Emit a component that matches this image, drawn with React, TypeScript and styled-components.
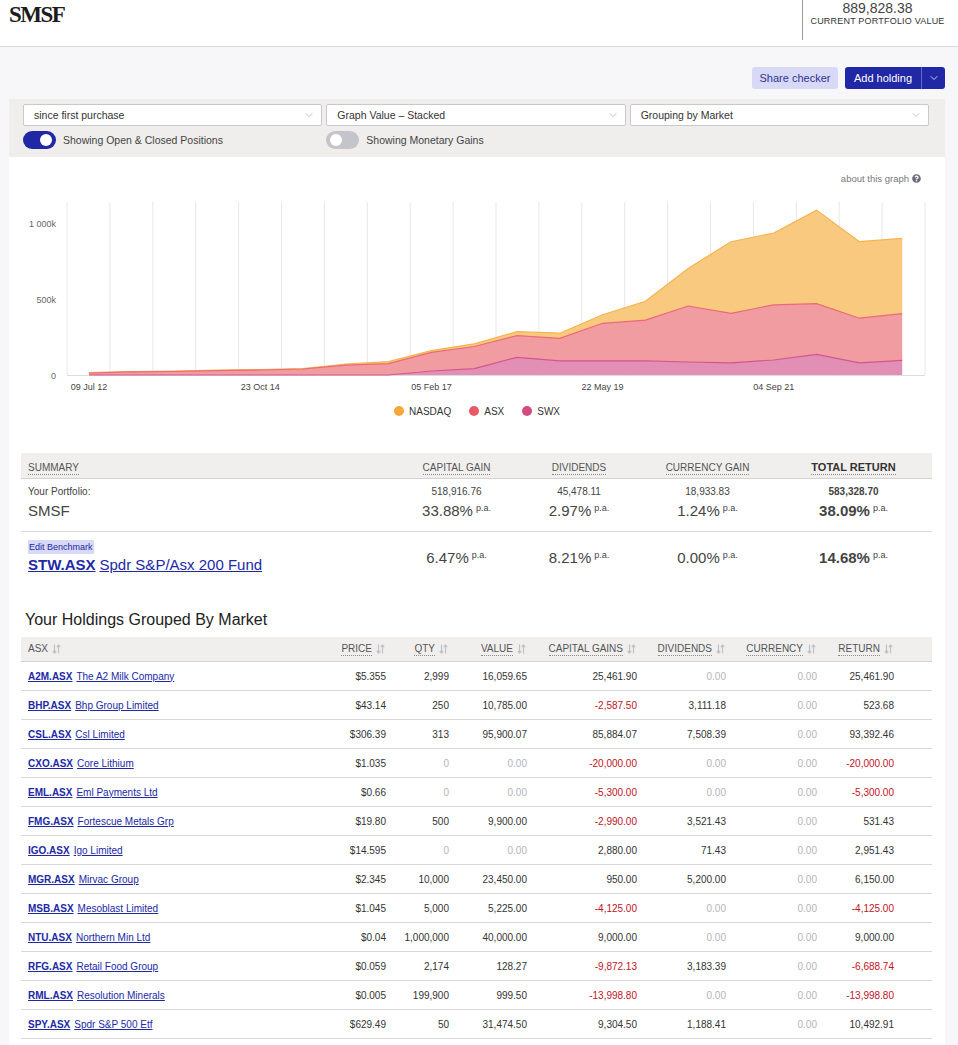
import React from "react";
import styled, { createGlobalStyle } from "styled-components";
import { ChevronDown } from "lucide-react";
import { FaQuestionCircle } from "react-icons/fa";

const GlobalStyle = createGlobalStyle`
  html, body {
    margin: 0;
    padding: 0;
    background: #f7f7f9;
  }
  body {
    font-family: "Liberation Sans", Arial, sans-serif;
    color: #333;
  }
  * { box-sizing: border-box; }
`;

const BLUE = "#2128a6";

/* ---------- header ---------- */

const Header = styled.header`
    display: flex;
    justify-content: space-between;
    align-items: flex-start;
    height: 47px;
    background: #fff;
    border-bottom: 1px solid #d9d9de;
`;

const Title = styled.h1`
    margin: 0;
    padding: 2px 0 0 9px;
    font-family: "Liberation Serif", "Times New Roman", serif;
    font-weight: 700;
    font-size: 23px;
    line-height: 26px;
    letter-spacing: -1.5px;
    color: #1c1c1c;
`;

const ValueBlock = styled.div`
    width: 150px;
    height: 40px;
    margin-right: 6px;
    border-left: 1px solid #9a9a9a;
    text-align: center;
`;

const ValueAmount = styled.div`
    font-size: 14px;
    line-height: 16px;
    color: #444;
`;

const ValueLabel = styled.div`
    font-size: 9px;
    line-height: 11px;
    letter-spacing: 0.2px;
    color: #333;
`;

/* ---------- action buttons ---------- */

const Actions = styled.div`
    display: flex;
    justify-content: flex-end;
    gap: 7px;
    padding: 20px 13px 10px 0;
`;

const ShareButton = styled.button`
    height: 22px;
    width: 86px;
    border: none;
    border-radius: 3px;
    background: #d8d9f6;
    color: #2e3494;
    font-family: inherit;
    font-size: 11px;
    padding: 0;
`;

const AddGroup = styled.div`
    display: flex;
    height: 22px;
    border-radius: 3px;
    overflow: hidden;
    background: ${BLUE};
`;

const AddButton = styled.button<{ $caret?: boolean }>`
    height: 22px;
    width: ${p => (p.$caret ? 24 : 76)}px;
    border: none;
    border-left: ${p => (p.$caret ? "1px solid rgba(255,255,255,0.3)" : "none")};
    background: transparent;
    color: #fff;
    font-family: inherit;
    font-size: 11px;
    padding: 0;
    display: flex;
    align-items: center;
    justify-content: center;
`;

/* ---------- card + filter bar ---------- */

const Card = styled.main`
    margin: 0 13px 0 9px;
    background: #fff;
    padding-bottom: 40px;
`;

const FilterBar = styled.div`
    background: #efeeed;
    padding: 5px 16px 8px 14px;
    display: grid;
    grid-template-columns: repeat(3, 1fr);
    column-gap: 4px;
    row-gap: 5px;
`;

const Select = styled.div`
    height: 22px;
    background: #fff;
    border: 1px solid #c9c9cd;
    border-radius: 2px;
    display: flex;
    align-items: center;
    justify-content: space-between;
    padding: 0 6px 0 10px;
    font-size: 10.5px;
    color: #333;
`;

const ToggleItem = styled.label`
    display: flex;
    align-items: center;
    gap: 7px;
    font-size: 10.5px;
    color: #444;
    height: 18px;
`;

const Switch = styled.span<{ $on?: boolean }>`
    position: relative;
    width: 33px;
    height: 18px;
    border-radius: 9px;
    background: ${p => (p.$on ? BLUE : "#c4c4ca")};
    &::after {
        content: "";
        position: absolute;
        top: 3px;
        left: ${p => (p.$on ? "17px" : "4px")};
        width: 12px;
        height: 12px;
        border-radius: 50%;
        background: #fff;
    }
`;

/* ---------- chart ---------- */

const ChartSection = styled.section`
    padding-top: 14px;
`;

const AboutRow = styled.div`
    display: flex;
    justify-content: flex-end;
    align-items: center;
    gap: 3px;
    height: 14px;
    padding-right: 24px;
    font-size: 9.5px;
    color: #777;
`;

const ChartSvg = styled.svg`
    display: block;
    margin-top: 9px;
    font-family: "Liberation Sans", Arial, sans-serif;
`;

const Legend = styled.div`
    display: flex;
    justify-content: center;
    gap: 18px;
    margin-top: 10px;
    height: 14px;
`;

const LegendItem = styled.div`
    display: flex;
    align-items: center;
    gap: 5px;
    font-size: 10px;
    color: #333;
`;

const Dot = styled.span<{ $c: string }>`
    width: 10px;
    height: 10px;
    border-radius: 50%;
    background: ${p => p.$c};
`;

/* ---------- summary ---------- */

const Content = styled.div`
    padding: 35px 13px 0 12px;
`;

const SumGrid = styled.div<{ $head?: boolean; $last?: boolean }>`
    display: grid;
    grid-template-columns: 374px 123px 122px 135px 1fr;
    align-items: center;
    background: ${p => (p.$head ? "#f0efee" : "#fff")};
    border-bottom: ${p => (p.$last ? "none" : `1px solid ${p.$head ? "#d4d4d4" : "#dcdcdc"}`)};
    height: ${p => (p.$head ? "26px" : "auto")};
    padding: ${p => (p.$head ? "0" : p.$last ? "8px 0 8px" : "6px 0 8px")};
`;

const HeadCell = styled.div<{ $left?: boolean; $strong?: boolean }>`
    text-align: ${p => (p.$left ? "left" : "center")};
    padding-left: ${p => (p.$left ? "7px" : "0")};
    span {
        font-size: ${p => (p.$strong ? "11px" : "10px")};
        font-weight: ${p => (p.$strong ? 700 : 400)};
        color: ${p => (p.$strong ? "#333" : "#555")};
        border-bottom: 1px dotted #8a8a8a;
        padding-bottom: 1px;
    }
`;

const LabelCell = styled.div`
    padding-left: 7px;
`;

const Small = styled.div<{ $bold?: boolean }>`
    font-size: 10px;
    line-height: 14px;
    color: #444;
    font-weight: ${p => (p.$bold ? 700 : 400)};
`;

const Big = styled.div<{ $bold?: boolean }>`
    font-size: 15px;
    line-height: 24px;
    height: 24px;
    color: #444;
    font-weight: ${p => (p.$bold ? 700 : 400)};
    sup {
        font-size: 9px;
        line-height: 0;
        font-weight: 400;
        vertical-align: 5px;
        margin-left: 3px;
    }
`;

const NumCell = styled.div`
    text-align: center;
`;

const EditTag = styled.span`
    display: block;
    width: fit-content;
    background: #d8d9f6;
    color: ${BLUE};
    font-size: 9px;
    line-height: 14px;
    padding: 0 1px;
`;

const BenchLine = styled.div`
    font-size: 15px;
    line-height: 22px;
    a {
        color: ${BLUE};
        text-decoration: underline;
    }
    a:first-child {
        font-weight: 700;
        margin-right: 4px;
    }
`;

/* ---------- holdings ---------- */

const SectionTitle = styled.h2`
    margin: 26px 0 7px 4px;
    font-size: 16px;
    line-height: 20px;
    font-weight: 400;
    color: #222;
`;

const HoldGrid = styled.div<{ $head?: boolean }>`
    display: grid;
    grid-template-columns: 309px 64px 63px 78px 110px 89px 91px 77px 1fr;
    align-items: center;
    height: ${p => (p.$head ? "25px" : "29px")};
    background: ${p => (p.$head ? "#f0efee" : "#fff")};
    border-bottom: 1px solid ${p => (p.$head ? "#d4d4d4" : "#d8d8dc")};
    font-size: 10px;
`;

const HCell = styled.div<{ $left?: boolean }>`
    display: flex;
    align-items: center;
    justify-content: ${p => (p.$left ? "flex-start" : "flex-end")};
    gap: 4px;
    padding: ${p => (p.$left ? "0 0 0 7px" : "0 9px 0 0")};
    color: #555;
    span {
        border-bottom: ${p => (p.$left ? "none" : "1px dotted #8a8a8a")};
        padding-bottom: 1px;
    }
`;

const NameCell = styled.div`
    padding-left: 7px;
    white-space: nowrap;
    a {
        color: ${BLUE};
        text-decoration: underline;
    }
    a:first-child {
        font-weight: 700;
        margin-right: 4px;
    }
`;

const Num = styled.div<{ $tone?: "neg" | "zero" }>`
    text-align: right;
    padding-right: 8px;
    color: ${p => (p.$tone === "neg" ? "#c0141f" : p.$tone === "zero" ? "#b4b4bc" : "#333")};
`;

/* ---------- data ---------- */

const swx = [0, 0, 0, 0, 0, 0, 0, 0, 26, 42, 116, 92, 92, 92, 85, 80, 98, 135, 80, 96];
const asx = [13, 20, 23, 29, 33, 39, 65, 74, 122, 144, 141, 148, 246, 267, 366, 323, 361, 331, 291, 305];
const nasdaq = [3, 3, 3, 4, 3, 3, 7, 13, 11, 17, 26, 33, 56, 123, 246, 468, 469, 612, 500, 492];

const X0 = 89;
const DX = 42.8;
const BASE = 376;
const SCALE = 0.153;
const px = (i: number) => X0 + DX * i;
const py = (v: number) => BASE - v * SCALE;

const lvl1 = swx;
const lvl2 = swx.map((v, i) => v + asx[i]);
const lvl3 = lvl2.map((v, i) => v + nasdaq[i]);

const line = (arr: number[]) => arr.map((v, i) => `${px(i).toFixed(1)},${py(v).toFixed(1)}`).join(" ");
const band = (upper: number[], lower: number[] | null) => {
    const top = upper.map((v, i) => `${px(i).toFixed(1)},${py(v).toFixed(1)}`);
    const bottom = (lower || upper.map(() => 0))
        .map((v, i) => `${px(i).toFixed(1)},${py(v).toFixed(1)}`)
        .reverse();
    return [...top, ...bottom].join(" ");
};

const xLabels = [
    { i: 0, t: "09 Jul 12" },
    { i: 4, t: "23 Oct 14" },
    { i: 8, t: "05 Feb 17" },
    { i: 12, t: "22 May 19" },
    { i: 16, t: "04 Sep 21" },
];

type Tone = "neg" | "zero" | undefined;
type Holding = { code: string; name: string; cells: [string, Tone][] };

const n = (s: string): [string, Tone] => [s, s.startsWith("-") ? "neg" : s === "0.00" || s === "0" ? "zero" : undefined];

const holdings: Holding[] = [
    ["A2M.ASX", "The A2 Milk Company", "$5.355", "2,999", "16,059.65", "25,461.90", "0.00", "0.00", "25,461.90"],
    ["BHP.ASX", "Bhp Group Limited", "$43.14", "250", "10,785.00", "-2,587.50", "3,111.18", "0.00", "523.68"],
    ["CSL.ASX", "Csl Limited", "$306.39", "313", "95,900.07", "85,884.07", "7,508.39", "0.00", "93,392.46"],
    ["CXO.ASX", "Core Lithium", "$1.035", "0", "0.00", "-20,000.00", "0.00", "0.00", "-20,000.00"],
    ["EML.ASX", "Eml Payments Ltd", "$0.66", "0", "0.00", "-5,300.00", "0.00", "0.00", "-5,300.00"],
    ["FMG.ASX", "Fortescue Metals Grp", "$19.80", "500", "9,900.00", "-2,990.00", "3,521.43", "0.00", "531.43"],
    ["IGO.ASX", "Igo Limited", "$14.595", "0", "0.00", "2,880.00", "71.43", "0.00", "2,951.43"],
    ["MGR.ASX", "Mirvac Group", "$2.345", "10,000", "23,450.00", "950.00", "5,200.00", "0.00", "6,150.00"],
    ["MSB.ASX", "Mesoblast Limited", "$1.045", "5,000", "5,225.00", "-4,125.00", "0.00", "0.00", "-4,125.00"],
    ["NTU.ASX", "Northern Min Ltd", "$0.04", "1,000,000", "40,000.00", "9,000.00", "0.00", "0.00", "9,000.00"],
    ["RFG.ASX", "Retail Food Group", "$0.059", "2,174", "128.27", "-9,872.13", "3,183.39", "0.00", "-6,688.74"],
    ["RML.ASX", "Resolution Minerals", "$0.005", "199,900", "999.50", "-13,998.80", "0.00", "0.00", "-13,998.80"],
    ["SPY.ASX", "Spdr S&P 500 Etf", "$629.49", "50", "31,474.50", "9,304.50", "1,188.41", "0.00", "10,492.91"],
].map(([code, name, ...rest]) => ({ code, name, cells: rest.map(n) }));

const SortIcon = () => (
    <svg width="9" height="10" viewBox="0 0 9 10">
        <g stroke="#c2c2c6" strokeWidth="1.2" fill="none">
            <path d="M2.5 0.5 V9 M0.8 7 L2.5 9 L4.2 7" />
            <path d="M6.5 9.5 V1 M4.8 3 L6.5 1 L8.2 3" />
        </g>
    </svg>
);

const Chart = () => (
    <ChartSvg width="936" height="200" viewBox="9 195 936 200">
        {Array.from({ length: 21 }, (_, i) => (
            <line key={i} x1={67 + 42.9 * i} x2={67 + 42.9 * i} y1={203} y2={376} stroke="#e8e8ea" strokeWidth="1" />
        ))}
        <line x1={67} x2={925} y1={376.5} y2={376.5} stroke="#dcdcdc" />
        <polygon points={band(lvl3, lvl2)} fill="#f9c576" fillOpacity="0.93" />
        <polygon points={band(lvl2, lvl1)} fill="#f0949a" fillOpacity="0.93" />
        <polygon points={band(lvl1, null)} fill="#df86ae" fillOpacity="0.93" />
        <polyline points={line(lvl3)} fill="none" stroke="#f6b24f" strokeWidth="1.2" />
        <polyline points={line(lvl2)} fill="none" stroke="#ea6a76" strokeWidth="1.2" />
        <polyline points={line(lvl1)} fill="none" stroke="#d6548d" strokeWidth="1.2" />
        <g fontSize="9" fill="#666" textAnchor="end">
            <text x={56} y={227.5}>1 000k</text>
            <text x={56} y={303.5}>500k</text>
            <text x={56} y={380}>0</text>
        </g>
        <g fontSize="9" fill="#444" textAnchor="middle">
            {xLabels.map(l => (
                <text key={l.t} x={px(l.i)} y={391}>{l.t}</text>
            ))}
        </g>
    </ChartSvg>
);

export default function App() {
    return (
        <>
            <GlobalStyle />
            <Header>
                <Title>SMSF</Title>
                <ValueBlock>
                    <ValueAmount>889,828.38</ValueAmount>
                    <ValueLabel>CURRENT PORTFOLIO VALUE</ValueLabel>
                </ValueBlock>
            </Header>

            <Actions>
                <ShareButton>Share checker</ShareButton>
                <AddGroup>
                    <AddButton>Add holding</AddButton>
                    <AddButton $caret>
                        <ChevronDown size={12} strokeWidth={1.5} />
                    </AddButton>
                </AddGroup>
            </Actions>

            <Card>
                <FilterBar>
                    <Select>
                        since first purchase <ChevronDown size={12} strokeWidth={1} color="#888" />
                    </Select>
                    <Select>
                        Graph Value – Stacked <ChevronDown size={12} strokeWidth={1} color="#888" />
                    </Select>
                    <Select>
                        Grouping by Market <ChevronDown size={12} strokeWidth={1} color="#888" />
                    </Select>
                    <ToggleItem>
                        <Switch $on />
                        Showing Open &amp; Closed Positions
                    </ToggleItem>
                    <ToggleItem>
                        <Switch />
                        Showing Monetary Gains
                    </ToggleItem>
                </FilterBar>

                <ChartSection>
                    <AboutRow>
                        about this graph <FaQuestionCircle size={9} color="#6b6b75" />
                    </AboutRow>
                    <Chart />
                    <Legend>
                        <LegendItem><Dot $c="#f7a73a" />NASDAQ</LegendItem>
                        <LegendItem><Dot $c="#e85a66" />ASX</LegendItem>
                        <LegendItem><Dot $c="#d34a80" />SWX</LegendItem>
                    </Legend>
                </ChartSection>

                <Content>
                    <SumGrid $head>
                        <HeadCell $left><span>SUMMARY</span></HeadCell>
                        <HeadCell><span>CAPITAL GAIN</span></HeadCell>
                        <HeadCell><span>DIVIDENDS</span></HeadCell>
                        <HeadCell><span>CURRENCY GAIN</span></HeadCell>
                        <HeadCell $strong><span>TOTAL RETURN</span></HeadCell>
                    </SumGrid>
                    <SumGrid>
                        <LabelCell>
                            <Small>Your Portfolio:</Small>
                            <Big>SMSF</Big>
                        </LabelCell>
                        <NumCell>
                            <Small>518,916.76</Small>
                            <Big>33.88%<sup>p.a.</sup></Big>
                        </NumCell>
                        <NumCell>
                            <Small>45,478.11</Small>
                            <Big>2.97%<sup>p.a.</sup></Big>
                        </NumCell>
                        <NumCell>
                            <Small>18,933.83</Small>
                            <Big>1.24%<sup>p.a.</sup></Big>
                        </NumCell>
                        <NumCell>
                            <Small $bold>583,328.70</Small>
                            <Big $bold>38.09%<sup>p.a.</sup></Big>
                        </NumCell>
                    </SumGrid>
                    <SumGrid $last>
                        <LabelCell>
                            <EditTag>Edit Benchmark</EditTag>
                            <BenchLine>
                                <a>STW.ASX</a>
                                <a>Spdr S&amp;P/Asx 200 Fund</a>
                            </BenchLine>
                        </LabelCell>
                        <NumCell><Big>6.47%<sup>p.a.</sup></Big></NumCell>
                        <NumCell><Big>8.21%<sup>p.a.</sup></Big></NumCell>
                        <NumCell><Big>0.00%<sup>p.a.</sup></Big></NumCell>
                        <NumCell><Big $bold>14.68%<sup>p.a.</sup></Big></NumCell>
                    </SumGrid>

                    <SectionTitle>Your Holdings Grouped By Market</SectionTitle>
                    <HoldGrid $head>
                        <HCell $left><span>ASX</span><SortIcon /></HCell>
                        {["PRICE", "QTY", "VALUE", "CAPITAL GAINS", "DIVIDENDS", "CURRENCY", "RETURN"].map(h => (
                            <HCell key={h}><span>{h}</span><SortIcon /></HCell>
                        ))}
                        <div />
                    </HoldGrid>
                    {holdings.map(h => (
                        <HoldGrid key={h.code}>
                            <NameCell>
                                <a>{h.code}</a>
                                <a>{h.name}</a>
                            </NameCell>
                            {h.cells.map(([v, tone], i) => (
                                <Num key={i} $tone={i === 0 ? undefined : tone}>{v}</Num>
                            ))}
                            <div />
                        </HoldGrid>
                    ))}
                </Content>
            </Card>
        </>
    );
}
